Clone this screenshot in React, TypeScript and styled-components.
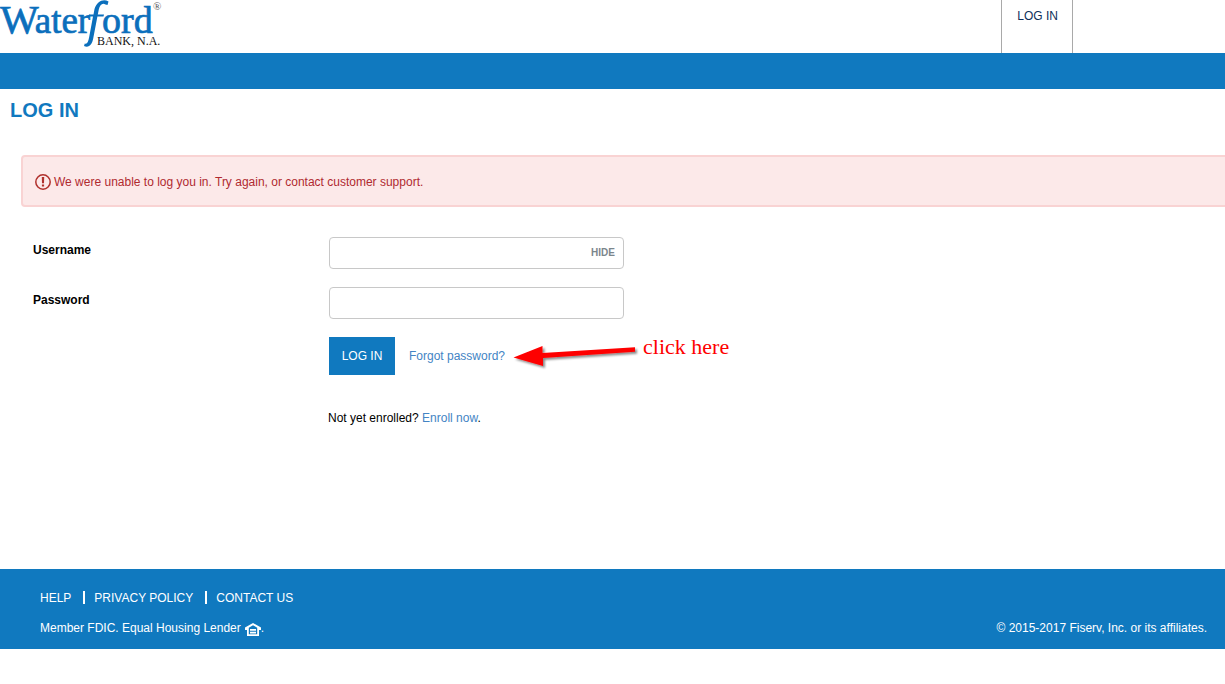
import React from "react";
import styled, { createGlobalStyle } from "styled-components";

const blue = "#1079bf";
const sans = '"Liberation Sans", Arial, Helvetica, sans-serif';
const serif = '"Liberation Serif", "Times New Roman", serif';

const GlobalStyle = createGlobalStyle`
  *, *::before, *::after { box-sizing: border-box; }
  body { margin: 0; background: #fff; color: #000; font: 12px/18px ${sans}; overflow-x: hidden; }
`;

const Page = styled.div`
  display: flex;
  flex-direction: column;
`;

const Header = styled.header`
  display: flex;
  justify-content: space-between;
  height: 53px;
`;

const Logo = styled.svg`
  display: block;
  width: 164px;
  height: 50px;
`;

const TopNav = styled.nav`
  display: flex;
  margin-right: 152px;
  border: solid #a9a9a9;
  border-width: 0 1px;
`;

const TopLink = styled.a`
  padding: 7px 14px 7px 15px;
  color: #0e2f5a;
  text-decoration: none;
`;

const Band = styled.div`
  height: 36px;
  background: ${blue};
`;

const Main = styled.main`
  display: flex;
  flex-direction: column;
  min-height: 480px;
`;

const Title = styled.h1`
  margin: 0;
  padding: 9px 10px;
  color: ${blue};
  font-size: 20px;
  line-height: 24px;
`;

const Alert = styled.div`
  display: flex;
  align-items: center;
  gap: 3px;
  height: 52px;
  margin: 24px -10px 0 21px;
  padding: 2px 12px 0;
  border: 2px solid #f9d3d3;
  border-radius: 4px;
  background: #fce9e9;
  color: #b02a30;
`;

const Form = styled.form`
  display: flex;
  flex-direction: column;
  gap: 18px;
  padding: 30px 33px 0;
`;

const Row = styled.div`
  display: grid;
  grid-template-columns: 296px minmax(0, 295px);
`;

const Label = styled.label`
  padding-top: 4px;
  font-weight: bold;
`;

const Field = styled.div`
  display: flex;
  align-items: center;
  height: 32px;
  border: 1px solid #c8c8c8;
  border-radius: 4px;
  background: #fff;
`;

const Input = styled.input`
  flex: 1;
  min-width: 0;
  height: 28px;
  padding: 0 8px;
  border: 0;
  outline: 0;
  background: transparent;
  font: inherit;
`;

const HideButton = styled.button`
  padding: 0 8px;
  border: 0;
  background: none;
  color: #7b868c;
  font: bold 10px/16px ${sans};
`;

const Actions = styled.div`
  display: flex;
  align-items: center;
  margin-left: 296px;
`;

const Submit = styled.button`
  width: 66px;
  height: 38px;
  padding: 0;
  border: 0;
  background: ${blue};
  color: #fff;
  font: 12px/18px ${sans};
`;

const Link = styled.a`
  color: #4384c4;
  text-decoration: none;
`;

const ForgotLink = styled(Link)`
  margin-left: 14px;
`;

const Arrow = styled.svg`
  display: block;
  width: 130px;
  height: 30px;
  margin-left: 8px;
`;

const Note = styled.span`
  padding-bottom: 18px;
  color: #fe0000;
  font: 22px/20px ${serif};
`;

const Enroll = styled.p`
  margin: 16px 0 0 295px;
`;

const Footer = styled.footer`
  display: flex;
  justify-content: space-between;
  align-items: flex-end;
  height: 80px;
  padding: 0 18px 12px 40px;
  background: ${blue};
  color: #fff;
`;

const FooterInfo = styled.div`
  display: flex;
  flex-direction: column;
  gap: 12px;
`;

const FooterLinks = styled.nav`
  display: flex;
  align-items: center;
`;

const FooterLink = styled.a`
  color: #fff;
  text-decoration: none;
  & + & {
    margin-left: 12px;
  }
  & + &::before {
    content: "";
    display: inline-block;
    width: 2px;
    height: 13px;
    margin-right: 9px;
    background: #fff;
    vertical-align: -2px;
  }
`;

const Member = styled.div`
  display: flex;
  align-items: center;
`;

const HouseIcon = styled.svg`
  width: 16px;
  height: 13px;
  margin: 2px 0 0 4px;
`;

export default function App() {
  return (
    <Page>
      <GlobalStyle />
      <Header>
        <Logo viewBox="0 0 164 50" role="img" aria-label="Waterford Bank, N.A.">
          <g fill="#0b6fbc" stroke="#0b6fbc" strokeWidth="0.7" fontFamily={serif} fontSize="37">
            <text x="0" y="33">
              <tspan fontSize="41">W</tspan>
              <tspan dx="-4">ater</tspan>
            </text>
            <text x="102" y="33" fontSize="38">ord</text>
          </g>
          <path
            d="M108.500 1.500C103-1.500 97 1.500 94.500 9L93.500 14.500H89L88.600 16.500H93L89.200 37C88.300 42 87 44.500 84.800 43.500L84 46C89 48.500 92.300 44 93.300 38L97.400 16.500H103.500L104 14.500H97.800L98.800 9.500C100 4.500 102.500 2.500 105.500 4.500L107.500 5Z"
            fill="#0b6fbc"
          />
          <text x="97" y="45" fontFamily={serif} fontSize="12" fill="#111">BANK, N.A.</text>
          <text x="153" y="10" fontFamily={serif} fontSize="11" fill="#555">®</text>
        </Logo>
        <TopNav aria-label="Account">
          <TopLink href="#login">LOG IN</TopLink>
        </TopNav>
      </Header>
      <Band />
      <Main>
        <Title>LOG IN</Title>
        <Alert role="alert">
          <svg width="16" height="16" viewBox="0 0 16 16" aria-hidden="true">
            <circle cx="8" cy="8" r="7.200" fill="none" stroke="#b0302c" strokeWidth="1.500" />
            <path d="M6.800 3H9.200L9 9.300H7ZM6.900 10.500H9.100V12.600H6.900Z" fill="#b0302c" />
          </svg>
          <span>We were unable to log you in. Try again, or contact customer support.</span>
        </Alert>
        <Form onSubmit={(e) => e.preventDefault()}>
          <Row>
            <Label htmlFor="username">Username</Label>
            <Field>
              <Input id="username" type="text" />
              <HideButton type="button">HIDE</HideButton>
            </Field>
          </Row>
          <Row>
            <Label htmlFor="password">Password</Label>
            <Field>
              <Input id="password" type="password" />
            </Field>
          </Row>
          <Actions>
            <Submit type="submit">LOG IN</Submit>
            <ForgotLink href="#forgot">Forgot password?</ForgotLink>
            <Arrow viewBox="0 0 130 30" aria-hidden="true">
              <defs>
                <filter id="arrow-shadow" x="-10%" y="-20%" width="120%" height="160%">
                  <feDropShadow dx="2" dy="2" stdDeviation="1.200" floodColor="#000" floodOpacity="0.45" />
                </filter>
              </defs>
              <path
                d="M0.500 16.500L29.500 5V12L122 6.300V10.800L30 17V25Z"
                fill="#fe0000"
                filter="url(#arrow-shadow)"
              />
            </Arrow>
            <Note>click here</Note>
          </Actions>
          <Enroll>
            Not yet enrolled? <Link href="#enroll">Enroll now</Link>.
          </Enroll>
        </Form>
      </Main>
      <Footer>
        <FooterInfo>
          <FooterLinks aria-label="Footer">
            <FooterLink href="#help">HELP</FooterLink>
            <FooterLink href="#privacy">PRIVACY POLICY</FooterLink>
            <FooterLink href="#contact">CONTACT US</FooterLink>
          </FooterLinks>
          <Member>
            Member FDIC. Equal Housing Lender
            <HouseIcon viewBox="0 0 16 13" aria-hidden="true">
              <path
                d="M8 0L0 4.500V7H2V13H14V7H16V4.500ZM8 2.200L12.200 4.700V11.300H3.800V4.700Z"
                fill="#fff"
                fillRule="evenodd"
              />
              <path d="M5 6H11V7.700H5ZM5 8.800H11V10.500H5Z" fill="#fff" />
            </HouseIcon>
            .
          </Member>
        </FooterInfo>
        <span>© 2015-2017 Fiserv, Inc. or its affiliates.</span>
      </Footer>
    </Page>
  );
}
